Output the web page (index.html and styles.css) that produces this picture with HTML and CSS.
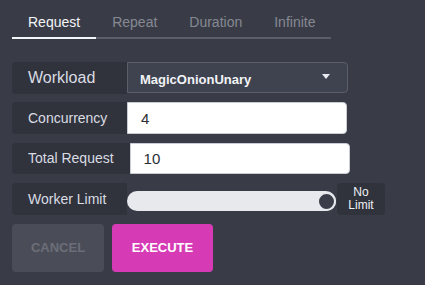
FILE: index.html
```html
<!DOCTYPE html>
<html>
<head>
<meta charset="utf-8">
<link rel="stylesheet" href="styles.css">
</head>
<body>
<div class="panel">
  <div class="tabs">
    <div class="tab active">Request</div>
    <div class="tab">Repeat</div>
    <div class="tab">Duration</div>
    <div class="tab">Infinite</div>
  </div>
  <div class="form">
    <div class="row">
      <div class="label big">Workload</div>
      <div class="select">
        <span class="select-text">MagicOnionUnary</span>
        <svg class="caret" width="8" height="5" viewBox="0 0 8 5"><path d="M0 0H8L4 5Z" fill="#e8eaf0"/></svg>
      </div>
    </div>
    <div class="row">
      <div class="label">Concurrency</div>
      <div class="input">4</div>
    </div>
    <div class="row">
      <div class="label">Total Request</div>
      <div class="input">10</div>
    </div>
    <div class="row">
      <div class="label">Worker Limit</div>
      <div class="slider">
        <div class="track"></div>
        <div class="thumb"></div>
      </div>
      <div class="nolimit">No<br>Limit</div>
    </div>
  </div>
  <div class="buttons">
    <button class="btn cancel">CANCEL</button>
    <button class="btn execute">EXECUTE</button>
  </div>
</div>
</body>
</html>
```
FILE: styles.css
```css
html, body {
  margin: 0;
  padding: 0;
  background: #393c47;
  font-family: "Liberation Sans", Arial, sans-serif;
}
.panel {
  padding: 7px 12px 0 12px;
}
.tabs {
  display: flex;
  width: 319px;
  border-bottom: 2px solid #5c5f69;
}
.tab {
  padding: 0 16px;
  height: 30px;
  line-height: 30px;
  font-size: 14px;
  color: #868992;
  margin-bottom: -2px;
  border-bottom: 2px solid transparent;
}
.tab.active {
  color: #f4f5f8;
  border-bottom-color: #f4f5f8;
}
.form {
  margin-top: 23px;
  display: flex;
  flex-direction: column;
  gap: 9px;
}
.row {
  display: flex;
  height: 31.4px;
  align-items: stretch;
}
.label {
  min-width: 83px;
  padding: 0 16px;
  background: #30333c;
  color: #d9dce3;
  font-size: 14px;
  display: flex;
  align-items: center;
  border-radius: 4px 0 0 4px;
}
.label.big {
  font-size: 16px;
  align-items: flex-start;
  padding-top: 7px;
  height: 25px;
}
.select {
  width: 221px;
  box-sizing: border-box;
  background: #3f4350;
  border: 1px solid #5b5f6b;
  border-radius: 0 4px 4px 0;
  display: flex;
  align-items: center;
  justify-content: space-between;
  padding: 0 17px 0 12px;
}
.select-text {
  color: #f2f3f7;
  font-weight: bold;
  font-size: 13px;
  margin-top: 3px;
}
.caret {
  margin-top: -3px;
}
.input {
  width: 220px;
  box-sizing: border-box;
  background: #ffffff;
  border: 1px solid #c9ccd4;
  border-radius: 0 4px 4px 0;
  display: flex;
  align-items: center;
  padding-left: 13px;
  font-size: 15px;
  color: #2a2d35;
}
.slider {
  position: relative;
  width: 210px;
  display: flex;
  align-items: center;
}
.track {
  width: 209px;
  height: 20px;
  background: #e8e9ed;
  border-radius: 10px;
  margin-top: 5px;
}
.thumb {
  position: absolute;
  right: 1px;
  top: 8.5px;
  width: 15px;
  height: 15px;
  border-radius: 50%;
  background: #3b3e49;
  border: 2px solid #e8e9ed;
}
.nolimit {
  width: 48px;
  background: #30333c;
  color: #eef0f5;
  font-size: 12px;
  line-height: 13px;
  display: flex;
  align-items: center;
  justify-content: center;
  text-align: center;
  border-radius: 4px;
}
.buttons {
  display: flex;
  gap: 8px;
  margin-top: 9px;
}
.btn {
  border: none;
  height: 48px;
  border-radius: 4px;
  font-family: "Liberation Sans", Arial, sans-serif;
  font-weight: bold;
  font-size: 13px;
  padding: 0;
}
.cancel {
  width: 92px;
  background: #4a4d57;
  color: #6b6e78;
}
.execute {
  width: 101px;
  background: #d63bb5;
  color: #ffffff;
}
```
